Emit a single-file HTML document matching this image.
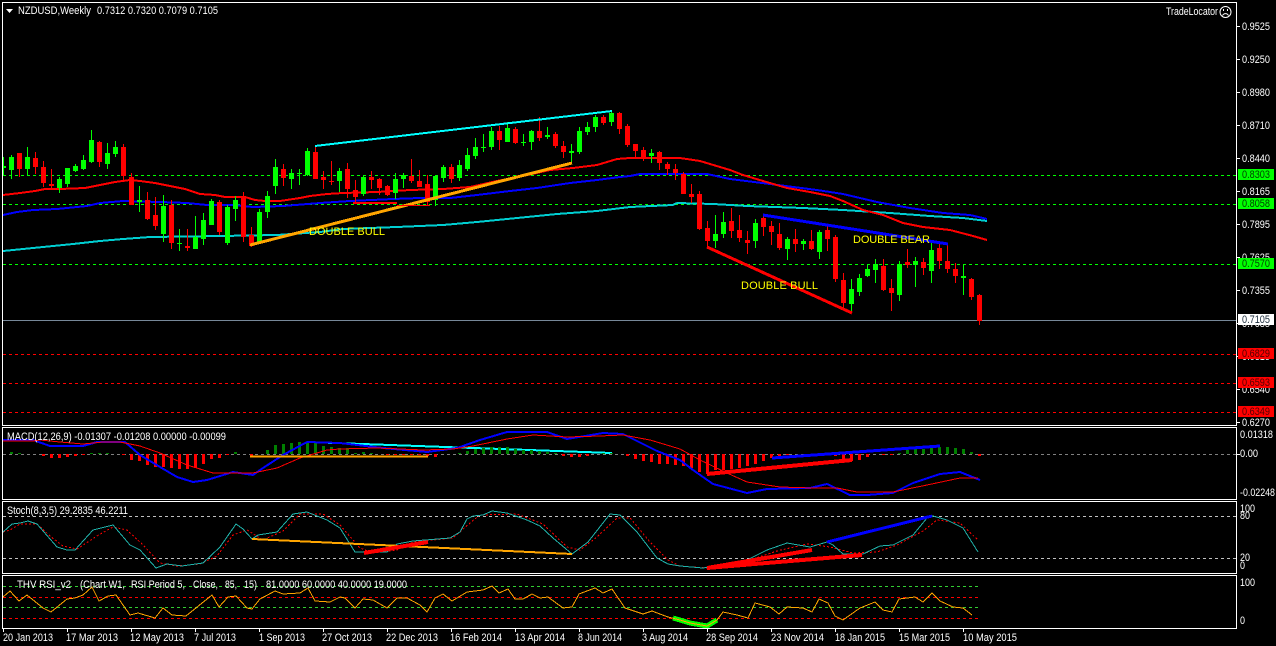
<!DOCTYPE html>
<html><head><meta charset="utf-8"><title>NZDUSD Weekly</title>
<style>
html,body{margin:0;padding:0;background:#000;width:1276px;height:646px;overflow:hidden}
svg{display:block}
text{font-family:"Liberation Sans",sans-serif;font-size:11px;fill:#fff}
.c{shape-rendering:crispEdges;fill:none}
</style></head><body>
<svg width="1276" height="646" viewBox="0 0 1276 646" xmlns="http://www.w3.org/2000/svg">
<rect width="1276" height="646" fill="#000"/>

<!-- main levels -->
<g class="c" stroke-width="1">
<path stroke="#00ff00" stroke-dasharray="3 3" d="M3 175.5H1236M3 204.5H1236M3 264.5H1236"/>
<path stroke="#ff0000" stroke-dasharray="3 3" d="M3 354.5H1236M3 383.5H1236M3 412.5H1236"/>
<path stroke="#778899" d="M3 320.5H1236"/>
</g>

<!-- moving averages -->
<g class="c" stroke-width="2">
<polyline stroke="#00ced1" points="3,251 23,249 43,247 73,244 100,241 123,239 150,237 220,236 277,235 320,232 343,229 397,227 443,225 477,222 517,218 557,214 597,211 630,207 673,205 677,203 713,204 747,206 803,208 843,210 890,213 930,216 963,218 987,221"/>
<polyline stroke="#0000ff" points="3,215 17,212 33,210 57,209 87,206 100,203 123,201 160,202 187,203 207,205 233,205 253,207 283,206 320,203 350,201 393,199 420,198 450,198 477,195 510,191 537,188 570,183 597,180 620,177 630,176 640,174 707,174 730,179 770,184 817,190 843,194 877,202 910,208 943,213 970,215 987,219"/>
<polyline stroke="#ff0000" points="3,195 20,193 35,191 45,189 60,189 85,188 100,185 115,182 130,180 140,181 155,183 165,185 185,189 200,194 215,195 225,197 245,197 255,200 265,201 280,201 300,198 310,196 327,194 343,193 377,192 410,190 443,189 470,187 497,181 523,176 550,170 573,168 597,165 617,159 630,158 680,158 700,161 730,170 743,175 763,181 787,188 810,192 830,196 843,201 863,210 883,215 903,223 923,227 950,230 973,236 987,240"/>
</g>

<!-- candles -->
<g class="c">
<path stroke="#00ff00" stroke-width="1" d="M3.5 157V175M11.5 155V179M27.5 147V175M59.5 177V193M67.5 168V187M75.5 164V172M83.5 155V170M91.5 130V163M107.5 143V169M115.5 141V157M139.5 186V212M163.5 195V242M179.5 229V251M195.5 216V249M203.5 213V245M211.5 199V225M227.5 205V245M235.5 196V221M259.5 209V244M267.5 191V218M275.5 159V194M291.5 169V189M299.5 169V185M307.5 148V176M339.5 168V192M363.5 176V196M395.5 173V199M403.5 173V188M435.5 175V206M443.5 165V182M459.5 160V181M467.5 148V171M475.5 138V159M483.5 134V152M491.5 127V150M507.5 122V142M523.5 134V146M531.5 130V150M547.5 127V139M571.5 144V164M579.5 127V154M587.5 122V135M595.5 115V132M611.5 110V126M651.5 149V163M715.5 215V248M723.5 212V238M755.5 219V248M787.5 237V260M803.5 239V250M819.5 230V259M851.5 279V313M859.5 274V296M867.5 265V277M875.5 259V283M899.5 261V301M915.5 257V287M931.5 243V283M963.5 264V295"/>
<path stroke="#00ff00" stroke-width="5" d="M3.5 166V168M11.5 157V170M27.5 157V169M59.5 179V188M67.5 168V184M75.5 166V171M83.5 160V169M91.5 140V162M107.5 153V164M115.5 147V154M139.5 200V202M163.5 206V234M179.5 243V244M195.5 237V249M203.5 220V239M211.5 201V225M227.5 207V243M235.5 200V209M259.5 212V242M267.5 196V212M275.5 167V186M291.5 173V179M299.5 173V174M307.5 151V175M339.5 171V181M363.5 177V194M395.5 179V193M403.5 175V179M435.5 176V200M443.5 167V178M459.5 165V178M467.5 155V169M475.5 147V156M483.5 147V148M491.5 131V147M507.5 128V142M523.5 142V143M531.5 131V142M547.5 135V137M571.5 151V153M579.5 131V152M587.5 127V132M595.5 117V127M611.5 113V122M651.5 153V156M715.5 234V241M723.5 222V234M755.5 223V241M787.5 239V249M803.5 241V244M819.5 232V252M851.5 289V304M859.5 278V292M867.5 269V276M875.5 264V270M899.5 264V295M915.5 261V265M931.5 250V271M963.5 276V278"/>
<path stroke="#ff0000" stroke-width="1" d="M19.5 153V177M35.5 152V174M43.5 161V187M51.5 169V189M99.5 141V167M123.5 144V181M131.5 173V205M147.5 192V220M155.5 197V230M171.5 200V249M187.5 229V251M219.5 200V235M243.5 192V242M251.5 227V247M283.5 164V186M315.5 146V179M323.5 171V189M331.5 161V185M347.5 163V198M355.5 180V202M371.5 171V189M379.5 178V195M387.5 185V196M411.5 159V183M419.5 170V187M427.5 175V205M451.5 164V183M499.5 126V150M515.5 127V144M539.5 117V141M555.5 132V148M563.5 141V158M603.5 115V125M619.5 112V134M627.5 124V147M635.5 144V157M643.5 147V161M659.5 151V170M667.5 162V175M675.5 164V180M683.5 172V194M691.5 184V203M699.5 191V230M707.5 221V248M731.5 208V238M739.5 215V242M747.5 231V254M763.5 215V236M771.5 221V245M779.5 223V250M795.5 229V252M811.5 230V250M827.5 225V251M835.5 235V282M843.5 273V308M883.5 259V291M891.5 279V311M907.5 249V268M923.5 258V275M939.5 243V269M947.5 243V273M955.5 263V283M971.5 278V300M979.5 294V325"/>
<path stroke="#ff0000" stroke-width="5" d="M19.5 153V169M35.5 158V167M43.5 167V183M51.5 184V186M99.5 142V162M123.5 147V176M131.5 177V205M147.5 200V219M155.5 215V226M171.5 205V243M187.5 246V248M219.5 202V232M243.5 197V237M251.5 235V246M283.5 169V178M315.5 152V179M323.5 177V180M331.5 181V182M347.5 169V189M355.5 190V197M371.5 177V180M379.5 179V188M387.5 186V195M411.5 176V181M419.5 181V187M427.5 184V202M451.5 167V179M499.5 131V140M515.5 129V143M539.5 131V138M555.5 134V146M563.5 146V152M603.5 117V123M619.5 113V129M627.5 126V145M635.5 144V151M643.5 150V157M659.5 152V163M667.5 164V169M675.5 169V173M683.5 174V194M691.5 194V197M699.5 194V229M707.5 228V241M731.5 221V231M739.5 230V238M747.5 240V243M763.5 218V227M771.5 226V232M779.5 234V248M795.5 239V244M811.5 241V249M827.5 230V239M835.5 237V279M843.5 280V303M883.5 266V290M891.5 288V293M907.5 262V265M923.5 262V268M939.5 248V261M947.5 261V269M955.5 269V276M971.5 279V297M979.5 295V321"/>
</g>

<!-- main trend lines -->
<g class="c">
<path stroke="#00ffff" stroke-width="2" d="M315 146L612 111"/>
<path stroke="#ffa500" stroke-width="3" d="M250 245L572 163"/>
<path stroke="#ff0000" stroke-width="2" d="M353 203L397 203"/>
<path stroke="#ff0000" stroke-width="1" d="M397 205.5H430"/>
<path stroke="#ff0000" stroke-width="3" d="M707 247L852 313"/>
<path stroke="#0000ff" stroke-width="3" d="M763 215L948 244"/>
</g>
<text x="309" y="235" style="fill:#ffff00" textLength="76" lengthAdjust="spacing">DOUBLE BULL</text>
<text x="741" y="289" style="fill:#ffff00" textLength="77" lengthAdjust="spacing">DOUBLE BULL</text>
<text x="853" y="243" style="fill:#ffff00" textLength="77" lengthAdjust="spacing">DOUBLE BEAR</text>

<!-- MACD pane -->
<g class="c">
<path stroke="#808080" stroke-dasharray="3 3" stroke-width="1" d="M3 454.5H1236"/>
<path stroke="#00ffff" stroke-width="2" d="M307 442L612 453"/>
<path stroke="#008000" stroke-width="3" d="M11.5 454v-2M19.5 454v-1M91.5 454v-1M99.5 454v-1M107.5 454v-1M235.5 454v-2M267.5 454v-4M275.5 454v-9M283.5 454v-10M291.5 454v-11M299.5 454v-12M307.5 454v-12M315.5 454v-11M323.5 454v-8M331.5 454v-7M339.5 454v-6M347.5 454v-6M355.5 454v-1M363.5 454v-2M371.5 454v-1M459.5 454v-1M467.5 454v-3M475.5 454v-5M483.5 454v-6M491.5 454v-7M499.5 454v-7M507.5 454v-7M515.5 454v-5M523.5 454v-4M531.5 454v-4M539.5 454v-3M547.5 454v-2M555.5 454v-1M603.5 454v-1M611.5 454v-1M899.5 454v-1M907.5 454v-4M915.5 454v-5M923.5 454v-5M931.5 454v-6M939.5 454v-7M947.5 454v-7M955.5 454v-6M963.5 454v-5M971.5 454v-2"/>
<path stroke="#ff0000" stroke-width="3" d="M43.5 454v2M51.5 454v4M59.5 454v4M67.5 454v3M75.5 454v2M83.5 454v1M123.5 454v1M131.5 454v6M139.5 454v7M147.5 454v11M155.5 454v13M163.5 454v13M171.5 454v14M179.5 454v15M187.5 454v15M195.5 454v14M203.5 454v10M211.5 454v5M219.5 454v4M227.5 454v1M251.5 454v2M387.5 454v1M395.5 454v1M403.5 454v1M411.5 454v1M419.5 454v1M427.5 454v2M435.5 454v3M563.5 454v2M571.5 454v3M579.5 454v3M587.5 454v2M627.5 454v2M635.5 454v5M643.5 454v7M651.5 454v8M659.5 454v10M667.5 454v10M675.5 454v11M683.5 454v12M691.5 454v14M699.5 454v18M707.5 454v20M715.5 454v16M723.5 454v16M731.5 454v15M739.5 454v14M747.5 454v12M755.5 454v10M763.5 454v7M771.5 454v4M779.5 454v2M787.5 454v1M835.5 454v2M843.5 454v5M851.5 454v7M859.5 454v6M867.5 454v3M883.5 454v1M891.5 454v1M979.5 454v2"/>
<polyline stroke="#0000ff" stroke-width="2" points="3,440 33,440 50,446 83,446 97,442 125,442 140,455 160,467 177,477 193,482 207,480 233,472 253,475 263,468 283,455 307,442 340,443 383,448 427,452 457,448 480,440 507,432 547,432 567,439 603,433 623,434 657,451 680,460 693,470 713,484 747,493 767,489 810,488 827,484 850,495 867,495 893,493 913,483 940,474 960,472 980,480"/>
<polyline stroke="#ff0000" stroke-width="1" points="3,441 33,441 40,440 60,442 83,444 103,442 120,442 140,446 160,453 187,465 213,473 253,473 277,468 300,458 327,450 340,449 377,448 423,450 453,449 473,446 507,439 533,435 567,437 600,436 623,435 650,440 680,449 700,460 727,473 747,482 780,487 813,488 837,488 857,492 893,492 927,485 960,478 978,478"/>
<path stroke="#ffa500" stroke-width="2" d="M250 456.5H428"/>
<path stroke="#ff0000" stroke-width="4" d="M707 474L852 460"/>
<path stroke="#0000ff" stroke-width="3" d="M772 458L940 446"/>
</g>

<!-- Stoch pane -->
<g class="c">
<path stroke="#c0c0c0" stroke-dasharray="3 3" stroke-width="1" d="M3 516.5H1236M3 558.5H1236"/>
<polyline stroke="#ff0000" stroke-width="1" stroke-dasharray="2 2" points="3,532 10,530 20,524 37,524 50,536 63,546 77,549 97,536 113,527 127,530 143,545 160,563 177,566 200,564 217,556 233,535 247,530 263,540 283,531 300,514 323,514 340,525 360,548 373,553 397,550 413,542 453,538 470,523 480,515 517,514 543,524 567,547 580,550 597,537 617,518 630,518 650,542 668,560 680,566 707,568 747,561 777,551 807,544 830,547 853,553 877,552 897,545 923,531 937,520 960,523 978,540"/>
<polyline stroke="#20b2aa" stroke-width="1" points="3,532 12,524 20,523 28,521 37,524 57,547 67,550 75,550 93,530 113,525 130,545 140,550 156,568 167,564 182,566 203,563 220,547 236,524 243,529 252,539 258,535 277,532 293,514 307,512 327,520 340,528 355,552 387,552 397,544 413,541 450,538 460,532 467,519 473,516 483,515 492,511 507,513 527,520 540,526 553,538 572,554 588,542 610,514 620,515 637,532 657,558 668,564 680,566 703,568 747,560 767,550 787,543 810,547 827,542 833,545 843,554 863,554 880,546 893,545 913,535 927,518 933,516 947,520 963,528 978,552"/>
<path stroke="#ffa500" stroke-width="2" d="M252 539L572 554"/>
<path stroke="#ff0000" stroke-width="4" d="M364 553L428 542M707 568L812 550M707 568L862 555"/>
<path stroke="#0000ff" stroke-width="3" d="M827 542L932 516"/>
</g>

<!-- RSI pane -->
<g class="c">
<path stroke="#32cd32" stroke-dasharray="3 3" stroke-width="1" d="M3 586.5H978M3 607.5H978"/>
<path stroke="#ff0000" stroke-dasharray="3 3" stroke-width="1" d="M3 597.5H978M3 618.5H978"/>
<polyline stroke="#00ff00" stroke-width="5" points="673,618 680,620 690,623 707,626 717,620"/>
<polyline stroke="#ffa500" stroke-width="1" points="3,597 10,591 19,601 27,595 43,608 51,612 67,599 75,598 83,595 92,587 99,601 108,596 116,595 130,615 138,613 155,618 163,608 172,615 186,616 212,595 219,607 228,597 236,596 247,608 252,609 260,599 275,591 283,594 300,593 308,588 315,601 330,602 340,597 345,598 355,608 363,599 373,600 387,608 397,598 407,598 420,605 427,612 435,598 443,594 452,601 467,592 483,590 492,586 499,593 508,589 515,599 523,599 532,594 540,598 548,597 563,608 572,607 579,594 595,588 603,593 612,589 625,608 643,614 652,611 668,617 680,620 690,623 707,626 717,620 723,612 737,615 748,618 755,603 770,607 779,614 787,607 803,608 812,612 819,599 828,603 835,616 843,620 860,608 875,602 883,610 892,612 899,599 915,597 923,602 932,593 940,601 953,607 963,608 972,615"/>
</g>

<!-- frames -->
<rect x="0" y="0" width="2" height="646" fill="#000"/>
<g class="c" stroke="#fff" stroke-width="1">
<path d="M2.5 2.5H1236.5V425.5H2.5Z"/>
<path d="M2.5 427.5H1236.5V499.5H2.5Z"/>
<path d="M2.5 501.5H1236.5V573.5H2.5Z"/>
<path d="M2.5 575.5H1236.5V628.5H2.5Z"/>
<path d="M1237 26.5h3M1237 59.5h3M1237 92.5h3M1237 125.5h3M1237 158.5h3M1237 191.5h3M1237 224.5h3M1237 257.5h3M1237 290.5h3M1237 323.5h3M1237 356.5h3M1237 389.5h3M1237 422.5h3M1237 454.5h3"/>
<path d="M3.5 629v3M67.5 629v3M131.5 629v3M195.5 629v3M259.5 629v3M323.5 629v3M387.5 629v3M451.5 629v3M515.5 629v3M579.5 629v3M643.5 629v3M707.5 629v3M771.5 629v3M835.5 629v3M899.5 629v3M963.5 629v3"/>
</g>

<!-- header -->
<path d="M6 9h7l-3.5 4z" fill="#fff"/>
<text x="18" y="14" textLength="73" lengthAdjust="spacingAndGlyphs">NZDUSD,Weekly</text>
<text x="97" y="14" textLength="121" lengthAdjust="spacingAndGlyphs">0.7312 0.7320 0.7079 0.7105</text>
<text x="1166" y="15" textLength="52" lengthAdjust="spacingAndGlyphs">TradeLocator</text>
<g fill="none" stroke="#fff" stroke-width="1">
<circle cx="1225.5" cy="12" r="5.5"/>
<path d="M1222.5 15.5c1.5-2.5 4.5-2.5 6 0"/>
</g>
<rect x="1223" y="9" width="1" height="2" fill="#fff"/><rect x="1227" y="9" width="1" height="2" fill="#fff"/>

<!-- price axis -->
<g>
<text x="1242" y="30" textLength="28" lengthAdjust="spacingAndGlyphs">0.9525</text>
<text x="1242" y="63" textLength="28" lengthAdjust="spacingAndGlyphs">0.9250</text>
<text x="1242" y="96" textLength="28" lengthAdjust="spacingAndGlyphs">0.8980</text>
<text x="1242" y="129" textLength="28" lengthAdjust="spacingAndGlyphs">0.8710</text>
<text x="1242" y="162" textLength="28" lengthAdjust="spacingAndGlyphs">0.8440</text>
<text x="1242" y="195" textLength="28" lengthAdjust="spacingAndGlyphs">0.8165</text>
<text x="1242" y="228" textLength="28" lengthAdjust="spacingAndGlyphs">0.7895</text>
<text x="1242" y="261" textLength="28" lengthAdjust="spacingAndGlyphs">0.7625</text>
<text x="1242" y="294" textLength="28" lengthAdjust="spacingAndGlyphs">0.7355</text>
<text x="1242" y="327" textLength="28" lengthAdjust="spacingAndGlyphs">0.7085</text>
<text x="1242" y="360" textLength="28" lengthAdjust="spacingAndGlyphs">0.6815</text>
<text x="1242" y="393" textLength="28" lengthAdjust="spacingAndGlyphs">0.6540</text>
<text x="1242" y="426" textLength="28" lengthAdjust="spacingAndGlyphs">0.6270</text>
</g>
<g class="c">
<rect x="1238" y="169" width="36" height="11" fill="#00ff00"/>
<rect x="1238" y="198" width="36" height="11" fill="#00ff00"/>
<rect x="1238" y="258" width="36" height="11" fill="#00ff00"/>
<rect x="1238" y="314" width="36" height="11" fill="#ffffff"/>
<rect x="1238" y="348" width="36" height="11" fill="#ff0000"/>
<rect x="1238" y="377" width="36" height="11" fill="#ff0000"/>
<rect x="1238" y="406" width="36" height="11" fill="#ff0000"/>
</g>
<text x="1242" y="178" style="fill:#004000" textLength="28" lengthAdjust="spacingAndGlyphs">0.8303</text>
<text x="1242" y="207" style="fill:#004000" textLength="28" lengthAdjust="spacingAndGlyphs">0.8058</text>
<text x="1242" y="267" style="fill:#004000" textLength="28" lengthAdjust="spacingAndGlyphs">0.7570</text>
<text x="1242" y="323" style="fill:#1a2a3a" textLength="28" lengthAdjust="spacingAndGlyphs">0.7105</text>
<text x="1242" y="357" style="fill:#500000" textLength="28" lengthAdjust="spacingAndGlyphs">0.6829</text>
<text x="1242" y="386" style="fill:#500000" textLength="28" lengthAdjust="spacingAndGlyphs">0.6593</text>
<text x="1242" y="415" style="fill:#500000" textLength="28" lengthAdjust="spacingAndGlyphs">0.6349</text>

<!-- sub-window labels -->
<text x="7" y="440" textLength="219" lengthAdjust="spacingAndGlyphs">MACD(12,26,9) -0.01307 -0.01208 0.00000 -0.00099</text>
<text x="7" y="514" textLength="121" lengthAdjust="spacingAndGlyphs">Stoch(8,3,5) 29.2835 46.2211</text>
<text x="17" y="588" textLength="54" lengthAdjust="spacingAndGlyphs">THV RSI_v2</text>
<text x="80" y="588" textLength="45" lengthAdjust="spacingAndGlyphs">(Chart W1,</text>
<text x="131" y="588" textLength="54" lengthAdjust="spacingAndGlyphs">RSI Period 5,</text>
<text x="193" y="588" textLength="25" lengthAdjust="spacingAndGlyphs">Close,</text>
<text x="225" y="588" textLength="12" lengthAdjust="spacingAndGlyphs">85,</text>
<text x="244" y="588" textLength="13" lengthAdjust="spacingAndGlyphs">15)</text>
<text x="266" y="588" textLength="141" lengthAdjust="spacingAndGlyphs">81.0000 60.0000 40.0000 19.0000</text>
<text x="1240" y="438" textLength="33" lengthAdjust="spacingAndGlyphs">0.01318</text>
<text x="1240" y="457" textLength="18" lengthAdjust="spacingAndGlyphs">0.00</text>
<text x="1240" y="496" textLength="35" lengthAdjust="spacingAndGlyphs">-0.02248</text>
<text x="1240" y="512" textLength="15" lengthAdjust="spacingAndGlyphs">100</text>
<text x="1240" y="519" textLength="10" lengthAdjust="spacingAndGlyphs">80</text>
<text x="1240" y="561" textLength="10" lengthAdjust="spacingAndGlyphs">20</text>
<text x="1240" y="569" textLength="5" lengthAdjust="spacingAndGlyphs">0</text>
<text x="1240" y="586" textLength="15" lengthAdjust="spacingAndGlyphs">100</text>
<text x="1240" y="624" textLength="5" lengthAdjust="spacingAndGlyphs">0</text>

<!-- time axis -->
<text x="3" y="641" textLength="50" lengthAdjust="spacingAndGlyphs">20 Jan 2013</text>
<text x="66" y="641" textLength="52" lengthAdjust="spacingAndGlyphs">17 Mar 2013</text>
<text x="130" y="641" textLength="54" lengthAdjust="spacingAndGlyphs">12 May 2013</text>
<text x="194" y="641" textLength="42" lengthAdjust="spacingAndGlyphs">7 Jul 2013</text>
<text x="259" y="641" textLength="46" lengthAdjust="spacingAndGlyphs">1 Sep 2013</text>
<text x="322" y="641" textLength="50" lengthAdjust="spacingAndGlyphs">27 Oct 2013</text>
<text x="386" y="641" textLength="52" lengthAdjust="spacingAndGlyphs">22 Dec 2013</text>
<text x="450" y="641" textLength="52" lengthAdjust="spacingAndGlyphs">16 Feb 2014</text>
<text x="515" y="641" textLength="50" lengthAdjust="spacingAndGlyphs">13 Apr 2014</text>
<text x="578" y="641" textLength="44" lengthAdjust="spacingAndGlyphs">8 Jun 2014</text>
<text x="642" y="641" textLength="46" lengthAdjust="spacingAndGlyphs">3 Aug 2014</text>
<text x="706" y="641" textLength="52" lengthAdjust="spacingAndGlyphs">28 Sep 2014</text>
<text x="771" y="641" textLength="53" lengthAdjust="spacingAndGlyphs">23 Nov 2014</text>
<text x="835" y="641" textLength="50" lengthAdjust="spacingAndGlyphs">18 Jan 2015</text>
<text x="899" y="641" textLength="51" lengthAdjust="spacingAndGlyphs">15 Mar 2015</text>
<text x="963" y="641" textLength="54" lengthAdjust="spacingAndGlyphs">10 May 2015</text>
</svg>
</body></html>
